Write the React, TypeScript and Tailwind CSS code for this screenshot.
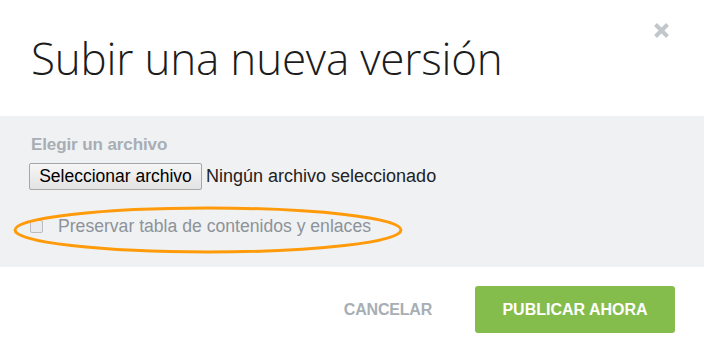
export default function App() {
  return (
    <div className="w-[704px] h-[349px] bg-white overflow-hidden relative" style={{ fontFamily: '"Liberation Sans", Arial, sans-serif' }}>
      {/* Header */}
      <div className="h-[116px] flex items-start px-[31px] pt-[28px] relative">
        <h1 className="text-[44px] leading-[60px] font-light text-[#1c1c1c] tracking-[-0.2px]" style={{ fontFamily: '"Open Sans", sans-serif' }}>
          Subir una nueva versión
        </h1>
        <button className="absolute left-[653px] top-[22px] w-[17px] h-[17px]">
          <svg viewBox="0 0 17 17" className="w-[17px] h-[17px]">
            <path d="M2.5 2.5 L14.5 14.5 M14.5 2.5 L2.5 14.5" stroke="#c2c7cc" strokeWidth="4" strokeLinecap="butt" />
          </svg>
        </button>
      </div>

      {/* Body */}
      <div className="h-[151px] bg-[#f0f1f3] px-[31px] pt-[19px] relative">
        <p className="text-[17px] font-bold text-[#a7aeb4] leading-[20px] tracking-[-0.1px]">Elegir un archivo</p>
        <div className="flex items-center mt-[8px] -ml-[2px]">
          <div className="h-[27px] w-[173px] border border-[#a6a6a6] rounded-[2px] bg-gradient-to-b from-[#f6f6f6] to-[#e3e3e3] flex items-center justify-center text-[17.5px] text-black">
            Seleccionar archivo
          </div>
          <span className="ml-[4px] text-[18px] text-[#222]">Ningún archivo seleccionado</span>
        </div>
        <label className="flex items-center mt-[27px] -ml-[1px]">
          <span className="w-[13px] h-[13px] border border-[#b9bdc2] rounded-[2px] bg-[#e9ebed]" />
          <span className="ml-[15px] text-[17.6px] text-[#8d9399] leading-[18px]">Preservar tabla de contenidos y enlaces</span>
        </label>
        <svg className="absolute left-0 top-0 pointer-events-none" width="704" height="151">
          <ellipse cx="208" cy="114" rx="193" ry="22" fill="none" stroke="#ff9b0a" strokeWidth="3" />
        </svg>
      </div>

      {/* Footer */}
      <div className="h-[82px] flex items-start justify-end pr-[29px] pt-[19px]">
        <button className="h-[47px] text-[16px] font-bold text-[#a7aeb4] mr-[43px] tracking-[-0.2px]">CANCELAR</button>
        <button className="h-[47px] w-[200px] rounded-[3px] bg-[#85bd4c] text-white text-[16px] font-bold">PUBLICAR AHORA</button>
      </div>
    </div>
  );
}
